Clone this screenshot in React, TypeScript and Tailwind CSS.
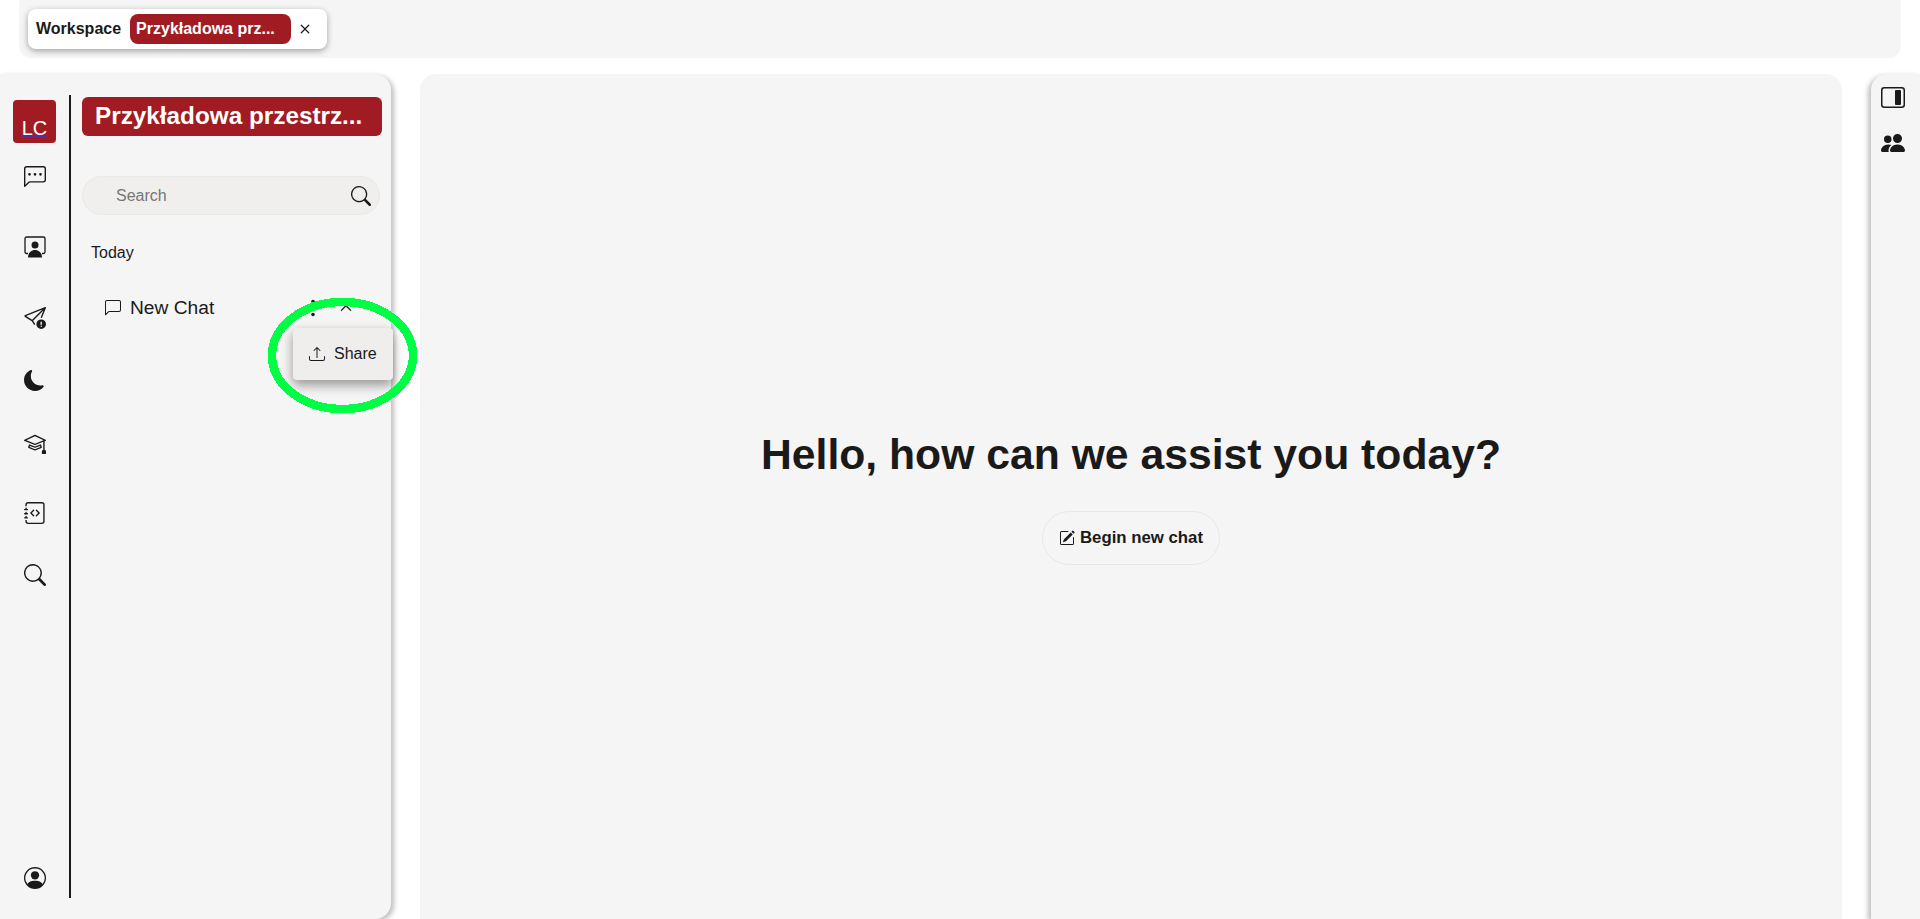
import React from "react";
import {
  BsChatLeftDots, BsSendExclamation, BsMoonFill, BsMortarboard, BsJournalCode,
  BsSearch, BsPersonCircle, BsPeopleFill, BsPencilSquare, BsChatLeft, BsUpload, BsChevronUp, BsX,
} from "react-icons/bs";

const F = "font-['Liberation_Sans',Arial,sans-serif]";

function SidebarToggle() {
  return (
    <svg width="24" height="21" viewBox="0 0 24 21" className="text-[#1a1a1a]">
      <rect x="0.75" y="0.75" width="22.5" height="19.5" rx="2.5" fill="none" stroke="currentColor" strokeWidth="1.5" />
      <rect x="14" y="3" width="6" height="15" rx="1" fill="currentColor" />
    </svg>
  );
}

function PortraitIcon() {
  return (
    <svg width="22" height="22" viewBox="0 0 22 22" className="mt-[48px] text-[#1a1a1a]">
      <path d="M4 17.5H2.5A1.5 1.5 0 0 1 1 16V2.5A1.5 1.5 0 0 1 2.5 1h17A1.5 1.5 0 0 1 21 2.5V16a1.5 1.5 0 0 1-1.5 1.5H18" fill="none" stroke="currentColor" strokeWidth="1.3" />
      <circle cx="11" cy="9" r="3.5" fill="currentColor" />
      <path d="M4 21.5c0-4.5 3-7.5 7-7.5s7 3 7 7.5z" fill="currentColor" />
    </svg>
  );
}

function TwoDots() {
  return (
    <svg width="6" height="18" viewBox="0 0 6 18" className="ml-[96px] text-[#1a1a1a]">
      <circle cx="3" cy="2.5" r="1.8" fill="currentColor" />
      <circle cx="3" cy="15.5" r="1.8" fill="currentColor" />
    </svg>
  );
}

export default function App() {
  return (
    <div className={`${F} relative flex h-[919px] w-full flex-col overflow-hidden bg-white text-[#1a1a1a]`}>
      <header className="ml-[19px] mr-[19px] flex h-[58px] shrink-0 items-start rounded-b-xl bg-[#f5f5f5] pl-[9px] pt-[9px]">
        <div className="flex h-[40px] w-[299px] items-center rounded-lg bg-white pl-[8px] shadow-[0_2px_6px_rgba(0,0,0,0.35)]">
          <span className="text-base font-bold">Workspace</span>
          <span className="ml-[9px] flex h-[30px] w-[161px] items-center rounded-lg bg-[#a01c22] pl-[6px] text-base font-bold text-white">
            Przykładowa prz...
          </span>
          <BsX className="ml-[4px] text-[20px]" />
        </div>
      </header>

      <div className="mt-[16px] flex min-h-0 flex-1">
        <aside className="relative flex w-[391px] shrink-0 rounded-r-2xl bg-[#f5f5f5] shadow-[3px_2px_5px_rgba(0,0,0,0.25)]">
          <nav className="flex w-[69px] shrink-0 flex-col items-center pt-[26px] text-[#1a1a1a]">
            <a className="flex h-[43px] w-[43px] items-end justify-center rounded bg-[#a01c22] pb-[1px] text-xl leading-7 text-white underline decoration-[#5b2aa0]">LC</a>
            <BsChatLeftDots className="mt-[23px] text-[22px]" />
            <PortraitIcon />
            <BsSendExclamation className="mt-[49px] text-[22px]" />
            <BsMoonFill className="mt-[41px] text-[21px]" />
            <BsMortarboard className="mt-[41px] text-[22px]" />
            <BsJournalCode className="mt-[48px] text-[22px]" />
            <BsSearch className="mt-[40px] text-[22px]" />
            <BsPersonCircle className="mt-auto mb-[30px] text-[22px]" />
          </nav>

          <div className="mb-[21px] mt-[21px] w-[2px] shrink-0 bg-[#1a1a1a]" />

          <div className="flex min-w-0 flex-1 flex-col pl-[11px] pr-[9px] pt-[23px]">
            <h2 className="flex h-[39px] w-[300px] items-center rounded-md bg-[#a01c22] pl-[13px] text-[24.3px] font-bold text-white">
              Przykładowa przestrz...
            </h2>
            <div className="mt-[40px] flex h-[39px] w-[298px] items-center justify-between rounded-full border border-[#e9e9e7] bg-[#f0efed] pl-[33px] pr-[8px]">
              <span className="text-base text-[#757575]">Search</span>
              <BsSearch className="text-[20px]" />
            </div>
            <p className="mt-[28px] pl-[9px] text-base leading-5">Today</p>
            <div className="mt-[33px] flex items-center pl-[23px]">
              <BsChatLeft className="text-[16px]" />
              <span className="ml-[9px] text-[19.2px] leading-6">New Chat</span>
              <TwoDots />
              <BsChevronUp className="ml-[24px] text-[12px]" stroke="currentColor" strokeWidth={1} />
            </div>
          </div>

          <div className="absolute left-[293px] top-[254px] flex h-[52px] w-[100px] items-center rounded bg-[#f0eeec] pl-[16px] shadow-[0_5px_12px_rgba(0,0,0,0.4)]">
            <BsUpload className="text-[16px]" />
            <span className="ml-[9px] text-base">Share</span>
          </div>
        </aside>

        <main className="ml-[29px] flex w-[1422px] shrink-0 flex-col items-center rounded-t-2xl bg-[#f5f5f5] pt-[355px]">
          <h1 className="text-[42.7px] font-bold leading-[50px]">Hello, how can we assist you today?</h1>
          <button className="mt-[32px] flex h-[54px] w-[178px] items-center justify-center gap-[5px] rounded-full border border-[#e8e8e8] text-[16.8px] font-bold">
            <BsPencilSquare className="text-[16px]" />
            Begin new chat
          </button>
        </main>

        <aside className="ml-[29px] flex flex-1 flex-col items-center rounded-tl-2xl bg-[#f5f5f5] pr-[6px] pt-[13px] shadow-[-3px_2px_5px_rgba(0,0,0,0.25)]">
          <SidebarToggle />
          <BsPeopleFill className="mt-[23px] text-[24px]" />
        </aside>
      </div>

      <svg className="pointer-events-none absolute left-[264px] top-[294px]" width="160" height="124" viewBox="0 0 160 124" shapeRendering="crispEdges">
        <ellipse cx="78.5" cy="61.5" rx="70.5" ry="53.5" fill="none" stroke="#00ff44" strokeWidth="8.5" />
      </svg>
    </div>
  );
}
